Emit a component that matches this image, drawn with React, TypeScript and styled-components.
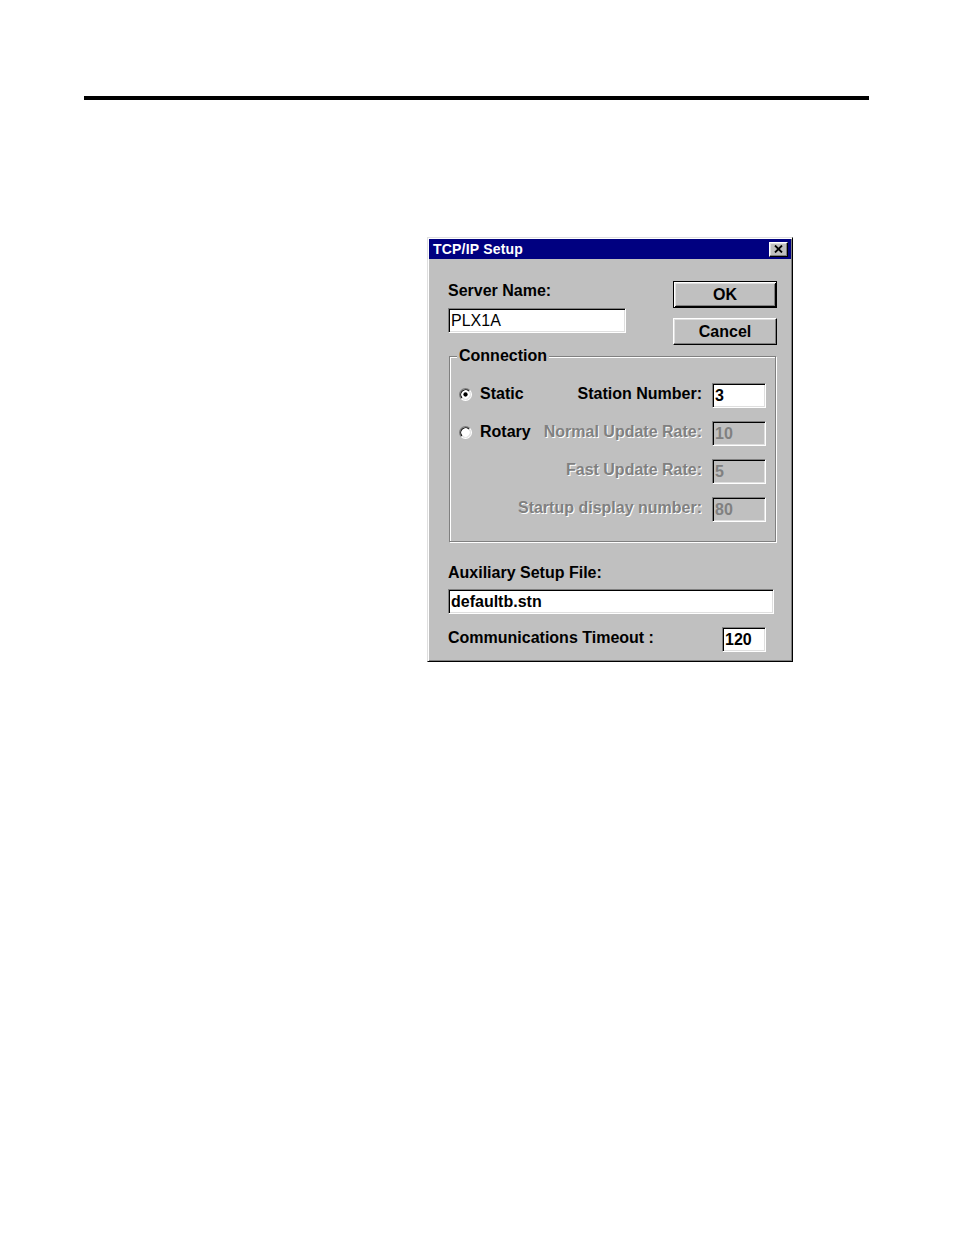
import React from "react";
import styled, { createGlobalStyle, css } from "styled-components";

const Global = createGlobalStyle`
  html, body { margin: 0; padding: 0; background: #ffffff; }
  body { font-family: "Liberation Sans", Arial, sans-serif; }
`;

const Page = styled.div`
  padding-top: 96px;
  min-height: 1235px;
  box-sizing: border-box;
  background: #fff;
`;

const Rule = styled.div`
  margin-left: 84px;
  width: 785px;
  height: 4px;
  background: #000;
`;

const Dialog = styled.div`
  margin-top: 137px;
  margin-left: 427px;
  width: 366px;
  height: 425px;
  box-sizing: border-box;
  padding: 1px;
  background: #c0c0c0;
  border: 1px solid;
  border-color: #dfdfdf #000 #000 #dfdfdf;
  box-shadow: inset 1px 1px #fff, inset -1px -1px #808080;
  display: flex;
  flex-direction: column;
`;

const TitleBar = styled.div`
  height: 20px;
  background: #000080;
  display: flex;
  align-items: center;
  justify-content: space-between;
  padding: 0 3px 0 4px;
  color: #fff;
  font-weight: bold;
  font-size: 14px;
  letter-spacing: 0.2px;
`;

const CloseButton = styled.div`
  width: 19px;
  height: 15px;
  box-sizing: border-box;
  background: #c0c0c0;
  border: 1px solid;
  border-color: #fff #000 #000 #fff;
  box-shadow: inset -1px -1px #808080, inset 1px 1px #dfdfdf;
  display: flex;
  align-items: center;
  justify-content: center;
`;

const Body = styled.div`
  flex: 1;
  display: flex;
  flex-direction: column;
  padding: 22px 14px 8px 19px;
  font-size: 16px;
  line-height: 18px;
  font-weight: bold;
  color: #000;
`;

const TopSection = styled.div`
  display: flex;
  justify-content: space-between;
  height: 64px;
`;

const LeftCol = styled.div`
  display: flex;
  flex-direction: column;
  width: 178px;
`;

const Label = styled.div<{ $disabled?: boolean; $top?: number }>`
  margin-top: ${(p) => p.$top ?? 0}px;
  white-space: nowrap;
  ${(p) =>
    p.$disabled &&
    css`
      color: #808080;
      text-shadow: 1px 1px 0 #fff;
    `}
`;

const Field = styled.div<{ $disabled?: boolean; $width?: number; $top?: number; $light?: boolean }>`
  box-sizing: border-box;
  flex: none;
  height: 25px;
  width: ${(p) => (p.$width ? `${p.$width}px` : "auto")};
  margin-top: ${(p) => p.$top ?? 0}px;
  padding: 0 2px;
  border: 1px solid;
  border-color: #808080 #fff #fff #808080;
  box-shadow: inset 1px 1px #000, inset -1px -1px #dfdfdf;
  background: ${(p) => (p.$disabled ? "#c0c0c0" : "#fff")};
  color: ${(p) => (p.$disabled ? "#808080" : "#000")};
  font-weight: ${(p) => (p.$light ? "normal" : "bold")};
  line-height: 24px;
  white-space: nowrap;
  overflow: hidden;
`;

const ButtonCol = styled.div`
  display: flex;
  flex-direction: column;
  gap: 10px;
  width: 104px;
`;

const Button = styled.div<{ $default?: boolean }>`
  box-sizing: border-box;
  height: 27px;
  display: flex;
  align-items: center;
  justify-content: center;
  background: #c0c0c0;
  ${(p) =>
    p.$default
      ? css`
          border: 1px solid #000;
          box-shadow: inset 1px 1px #fff, inset -1px -1px #000,
            inset 2px 2px #dfdfdf, inset -2px -2px #808080;
        `
      : css`
          border: 1px solid;
          border-color: #fff #000 #000 #fff;
          box-shadow: inset -1px -1px #808080, inset 1px 1px #dfdfdf;
        `}
`;

const Group = styled.fieldset`
  margin: 2px 1px 0 1px;
  padding: 18px 9px 19px 9px;
  border: 1px solid #808080;
  box-shadow: inset 1px 1px #fff, 1px 1px #fff;
  min-width: 0;
  display: flex;
  flex-direction: column;
  gap: 13px;
`;

const Legend = styled.legend`
  margin-left: -2px;
  padding: 0 2px;
  background: #c0c0c0;
  line-height: 18px;
`;

const GroupRow = styled.div`
  display: flex;
  align-items: flex-start;
  height: 25px;
`;

const RadioItem = styled.div`
  display: flex;
  align-items: center;
  gap: 8px;
  margin-top: 2px;
  white-space: nowrap;
  margin-right: auto;
`;

const RowLabel = styled(Label)`
  margin-top: 2px;
  margin-left: auto;
  margin-right: 10px;
`;

const RadioIcon = styled.svg`
  display: block;
  flex: none;
`;

const Row = styled.div<{ $top?: number }>`
  display: flex;
  justify-content: space-between;
  align-items: flex-start;
  margin-top: ${(p) => p.$top ?? 0}px;
`;

const Radio: React.FC<{ checked?: boolean }> = ({ checked }) => (
  <RadioIcon width="13" height="13" viewBox="0 0 12 12">
    <circle cx="6" cy="6" r="5" fill="#fff" />
    <path d="M2.11 9.89 A5.5 5.5 0 0 1 9.89 2.11" stroke="#808080" strokeWidth="1" fill="none" />
    <path d="M9.89 2.11 A5.5 5.5 0 0 1 2.11 9.89" stroke="#fff" strokeWidth="1" fill="none" />
    <path d="M2.82 9.18 A4.5 4.5 0 0 1 9.18 2.82" stroke="#000" strokeWidth="1" fill="none" />
    <path d="M9.18 2.82 A4.5 4.5 0 0 1 2.82 9.18" stroke="#dfdfdf" strokeWidth="1" fill="none" />
    {checked && <circle cx="6" cy="6" r="2" fill="#000" />}
  </RadioIcon>
);

const CloseX = () => (
  <svg width="9" height="8" viewBox="0 0 9 8">
    <path d="M1 0.5 L8 7.5 M8 0.5 L1 7.5" stroke="#000" strokeWidth="1.8" />
  </svg>
);

export default function App() {
  return (
    <>
      <Global />
      <Page>
        <Rule />
        <Dialog>
          <TitleBar>
            <span>TCP/IP Setup</span>
            <CloseButton>
              <CloseX />
            </CloseButton>
          </TitleBar>
          <Body>
            <TopSection>
              <LeftCol>
                <Label $top={1}>Server Name:</Label>
                <Field $top={8} $light>
                  PLX1A
                </Field>
              </LeftCol>
              <ButtonCol>
                <Button $default>OK</Button>
                <Button>Cancel</Button>
              </ButtonCol>
            </TopSection>
            <Group>
              <Legend>Connection</Legend>
              <GroupRow>
                <RadioItem>
                  <Radio checked />
                  <span>Static</span>
                </RadioItem>
                <RowLabel>Station Number:</RowLabel>
                <Field $width={54}>3</Field>
              </GroupRow>
              <GroupRow>
                <RadioItem>
                  <Radio />
                  <span>Rotary</span>
                </RadioItem>
                <RowLabel $disabled>Normal Update Rate:</RowLabel>
                <Field $width={54} $disabled>
                  10
                </Field>
              </GroupRow>
              <GroupRow>
                <RowLabel $disabled>Fast Update Rate:</RowLabel>
                <Field $width={54} $disabled>
                  5
                </Field>
              </GroupRow>
              <GroupRow>
                <RowLabel $disabled>Startup display number:</RowLabel>
                <Field $width={54} $disabled>
                  80
                </Field>
              </GroupRow>
            </Group>
            <Label $top={22}>Auxiliary Setup File:</Label>
            <Field $top={7} style={{ marginRight: 3 }}>
              defaultb.stn
            </Field>
            <Row $top={13}>
              <Label $top={2}>Communications Timeout :</Label>
              <Field $width={44} style={{ marginRight: 11 }}>
                120
              </Field>
            </Row>
          </Body>
        </Dialog>
      </Page>
    </>
  );
}
